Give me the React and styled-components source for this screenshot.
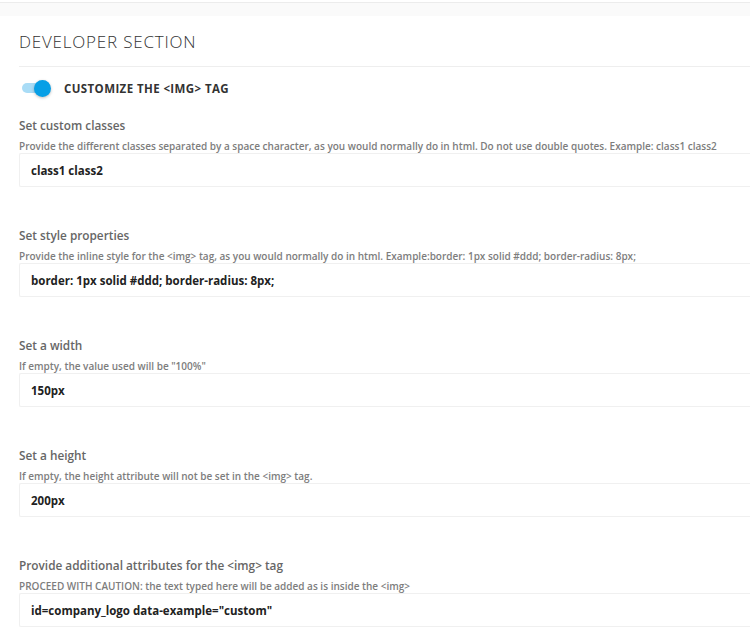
import React from "react";
import styled, { createGlobalStyle } from "styled-components";

const GlobalStyle = createGlobalStyle`
  html, body {
    margin: 0;
    padding: 0;
    background: #ffffff;
    overflow: hidden;
  }
  body {
    font-family: "Open Sans", "Noto Sans", Arial, sans-serif;
    color: #333;
  }
`;

const Page = styled.div`
  width: 100%;
  padding-top: 2px;
`;

const TopStrip = styled.div`
  height: 13px;
  background: #fafafa;
  border-top: 1px solid #ececec;
`;

const Section = styled.section`
  padding-left: 19px;
`;

const Title = styled.h2`
  margin: 16px 0 0;
  font-size: 17px;
  line-height: 20px;
  font-weight: 300;
  color: #333;
  letter-spacing: 0.8px;
  padding-bottom: 14px;
  border-bottom: 1px solid #eeeeee;
`;

const ToggleRow = styled.div`
  display: flex;
  align-items: center;
  height: 20px;
  margin-top: 11px;
`;

const Switch = styled.span`
  position: relative;
  display: inline-block;
  width: 28px;
  height: 10px;
  margin-left: 3px;
  border-radius: 5px;
  background: ${(p) => (p.$on ? "#a9dcf6" : "#ddd")};
`;

const Knob = styled.span`
  position: absolute;
  top: 50%;
  left: ${(p) => (p.$on ? "12px" : "-3px")};
  width: 17px;
  height: 17px;
  margin-top: -8.5px;
  border-radius: 50%;
  background: #079fe6;
  box-shadow: 0 1px 3px rgba(0, 0, 0, 0.25);
`;

const ToggleLabel = styled.span`
  margin-left: 14px;
  font-size: 11.5px;
  letter-spacing: 0.4px;
  font-weight: 700;
  color: #333;
`;

const Field = styled.div`
  margin-top: ${(p) => (p.$first ? "19px" : "40px")};
`;

const Label = styled.div`
  font-size: 11.8px;
  line-height: 16px;
  font-weight: 600;
  color: #666;
`;

const Hint = styled.div`
  margin-top: 7px;
  margin-bottom: 1px;
  font-size: 10px;
  line-height: 12px;
  font-weight: 600;
  color: #7d7d7d;
  white-space: nowrap;
`;

const Input = styled.input`
  display: block;
  box-sizing: border-box;
  width: 100%;
  height: 34px;
  padding: 0 11px;
  border: 1px solid #f0f0f0;
  border-right: none;
  border-radius: 2px 0 0 2px;
  background: #fff;
  font-family: inherit;
  font-size: 11.5px;
  font-weight: 700;
  color: #222;
  outline: none;
`;

const fields = [
  {
    label: "Set custom classes",
    hint: "Provide the different classes separated by a space character, as you would normally do in html. Do not use double quotes. Example: class1 class2",
    value: "class1 class2",
  },
  {
    label: "Set style properties",
    hint: "Provide the inline style for the <img> tag, as you would normally do in html. Example:border: 1px solid #ddd; border-radius: 8px;",
    value: "border: 1px solid #ddd; border-radius: 8px;",
  },
  {
    label: "Set a width",
    hint: 'If empty, the value used will be "100%"',
    value: "150px",
  },
  {
    label: "Set a height",
    hint: "If empty, the height attribute will not be set in the <img> tag.",
    value: "200px",
  },
  {
    label: "Provide additional attributes for the <img> tag",
    hint: "PROCEED WITH CAUTION: the text typed here will be added as is inside the <img>",
    value: 'id=company_logo data-example="custom"',
  },
];

export default function App() {
  return (
    <>
      <GlobalStyle />
      <Page>
        <TopStrip />
        <Section>
          <Title>DEVELOPER SECTION</Title>
          <ToggleRow>
            <Switch $on>
              <Knob $on />
            </Switch>
            <ToggleLabel>CUSTOMIZE THE &lt;IMG&gt; TAG</ToggleLabel>
          </ToggleRow>
          {fields.map((f, i) => (
            <Field key={f.label} $first={i === 0}>
              <Label>{f.label}</Label>
              <Hint>{f.hint}</Hint>
              <Input defaultValue={f.value} />
            </Field>
          ))}
        </Section>
      </Page>
    </>
  );
}
